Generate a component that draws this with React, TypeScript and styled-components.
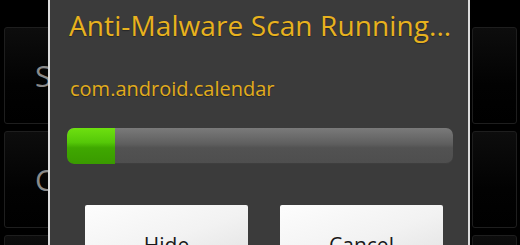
import React from "react";
import styled, { createGlobalStyle } from "styled-components";

const Global = createGlobalStyle`
  html, body { margin: 0; padding: 0; background: #000; }
  body { width: 520px; height: 245px; overflow: hidden; font-family: "Open Sans", "DejaVu Sans", sans-serif; }
`;

const Screen = styled.div`
  display: flex;
  width: 520px;
  height: 245px;
  overflow: hidden;
  background: #000;
`;

const Side = styled.div<{ $w: number; $pad: number }>`
  width: ${(p) => p.$w}px;
  flex: none;
  overflow: hidden;
  display: flex;
  flex-direction: column;
  gap: 7px;
  padding-top: 27px;
  padding-left: ${(p) => p.$pad}px;
  box-sizing: border-box;
`;

const Card = styled.div<{ $w: number }>`
  flex: none;
  width: ${(p) => p.$w}px;
  height: 97px;
  box-sizing: border-box;
  border: 1px solid #1e1e1e;
  border-radius: 3px;
  background: linear-gradient(#0d0d0d, #020202 60%, #000);
  display: flex;
  align-items: center;
  padding-left: 30px;
  color: #8a8a8a;
  font-size: 30px;
  font-family: "Open Sans", sans-serif;
`;

const Dialog = styled.div`
  width: 422px;
  flex: none;
  box-sizing: border-box;
  background: #3b3b3b;
  border-left: 2px solid #dcdcdc;
  border-right: 2px solid #dcdcdc;
  display: flex;
  flex-direction: column;
  & > * { flex: none; }
`;

const Title = styled.div`
  color: #e8b21e;
  font-size: 28px;
  line-height: 38px;
  margin-top: 6px;
  padding-left: 19px;
  white-space: nowrap;
  letter-spacing: 0.1px;
  text-shadow: 0 1px 1px rgba(0,0,0,0.35);
`;

const Subtitle = styled.div`
  color: #e2ac1c;
  font-size: 20px;
  line-height: 28px;
  margin-top: 31px;
  padding-left: 20px;
  white-space: nowrap;
  text-shadow: 0 1px 1px rgba(0,0,0,0.35);
`;

const Track = styled.div`
  margin: 25px 15px 0 17px;
  height: 36px;
  border-radius: 7px;
  background: linear-gradient(#7a7a7a, #5e5e5e 45%, #525252 55%, #4e4e4e);
  box-shadow: inset 0 -1px 0 rgba(0,0,0,0.2);
  overflow: hidden;
  display: flex;
`;

const Fill = styled.div`
  height: 100%;
  border-radius: 7px 0 0 7px;
  background: linear-gradient(#6ee010, #55c808 40%, #3fa800 55%, #3a9a00);
`;

const Buttons = styled.div`
  display: flex;
  gap: 32px;
  padding-left: 35px;
  margin-top: 41px;
`;

const Button = styled.div`
  width: 163px;
  height: 72px;
  flex: none;
  border-radius: 2px;
  background: linear-gradient(160deg, #fdfdfd, #f2f2f2 50%, #dedede);
  color: #1a1a1a;
  font-size: 21px;
  display: flex;
  justify-content: center;
  padding-top: 26px;
  box-sizing: border-box;
`;

export default function App() {
  const progress = 48;
  return (
    <>
      <Global />
      <Screen>
        <Side $w={48} $pad={4}>
          <Card $w={300}>S</Card>
          <Card $w={300}>C</Card>
          <Card $w={300} />
        </Side>
        <Dialog>
          <Title>Anti-Malware Scan Running...</Title>
          <Subtitle>com.android.calendar</Subtitle>
          <Track>
            <Fill style={{ width: progress }} />
          </Track>
          <Buttons>
            <Button>Hide</Button>
            <Button>Cancel</Button>
          </Buttons>
        </Dialog>
        <Side $w={50} $pad={2}>
          <Card $w={45} />
          <Card $w={45} />
          <Card $w={45} />
        </Side>
      </Screen>
    </>
  );
}
